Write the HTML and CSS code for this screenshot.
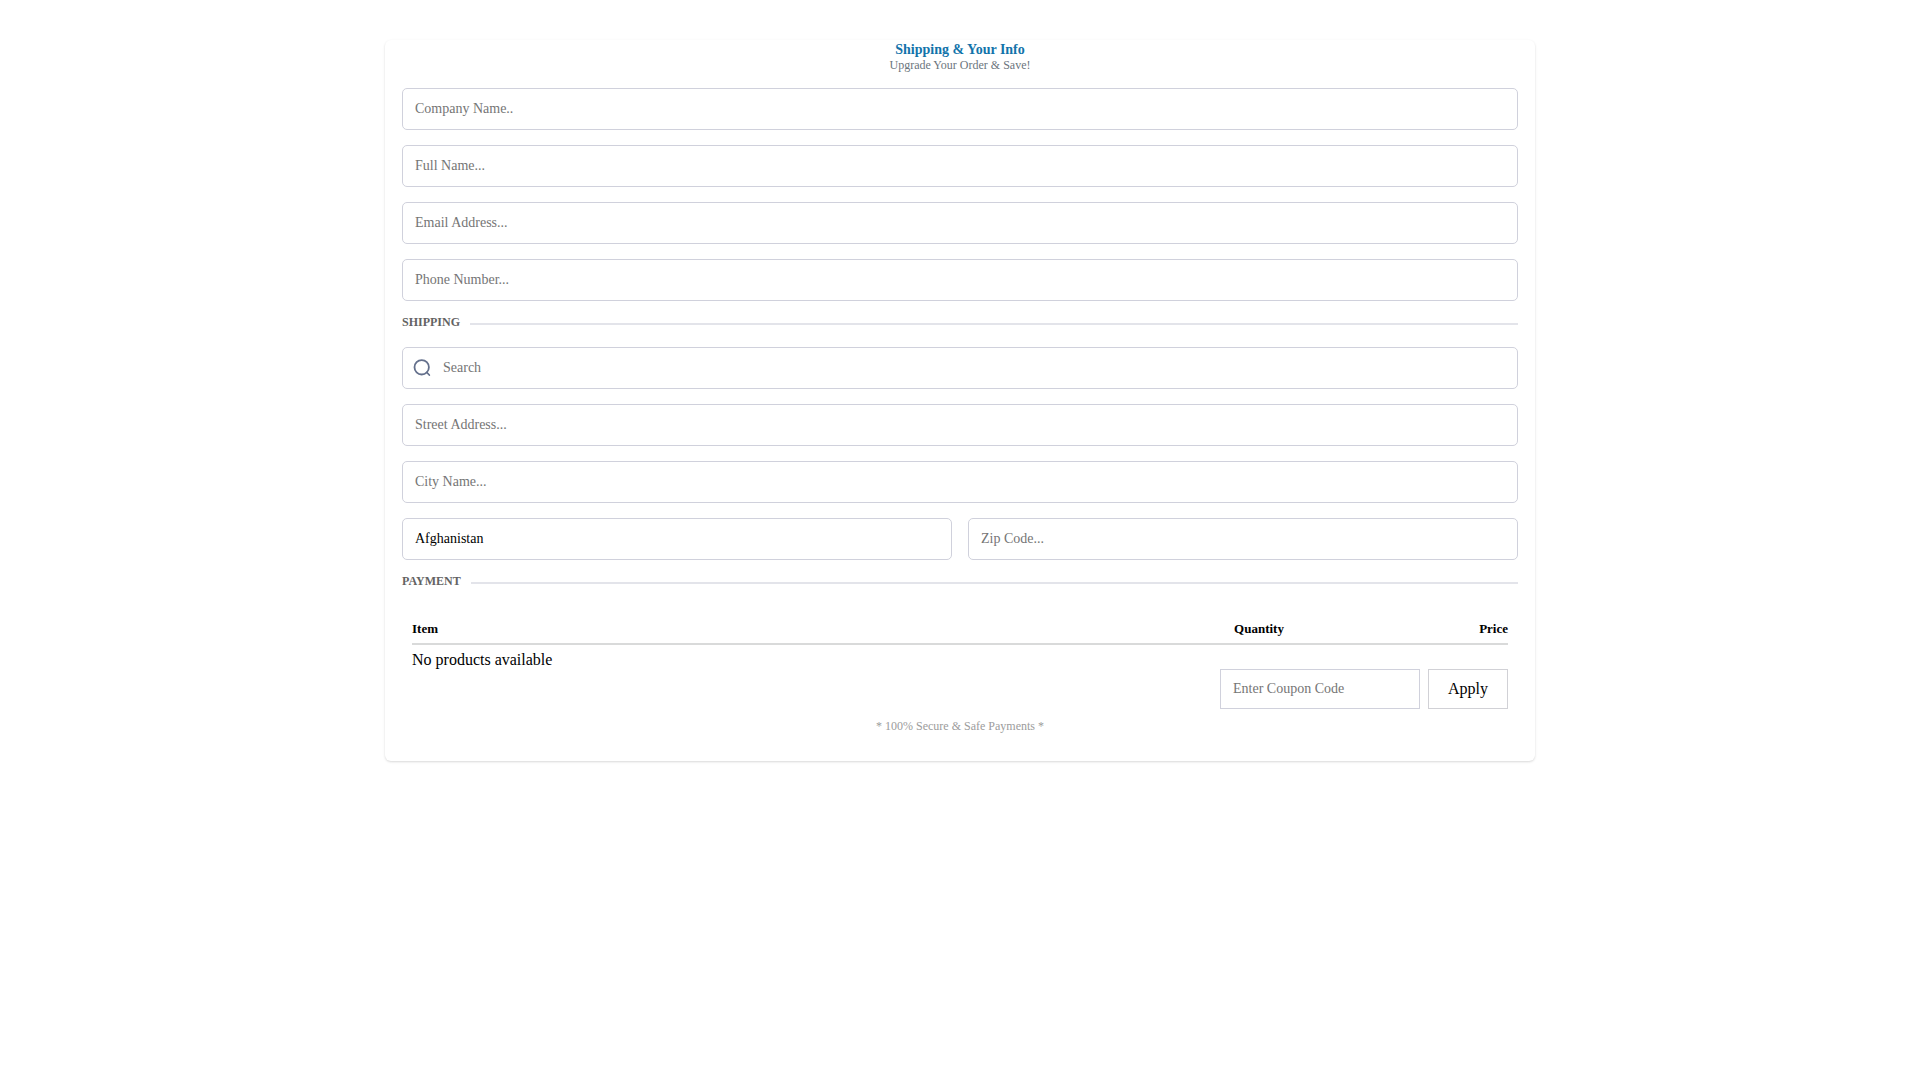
FILE: index.html
```html
<!DOCTYPE html>
<html lang="en">
<head>
  <meta charset="UTF-8" />
  <meta name="viewport" content="width=device-width, initial-scale=1.0" />
  <title>Shipping &amp; Your Info</title>
  <link rel="stylesheet" href="styles.css">
</head>
<body>
  <form class="order-form">
    <div class="form-header">
      <h1>Shipping &amp; Your Info</h1>
      <p>Upgrade Your Order &amp; Save!</p>
    </div>

    <div class="fields">
      <input class="field" type="text" name="company" placeholder="Company Name.." aria-label="Company name" />
      <input class="field" type="text" name="name" placeholder="Full Name..." aria-label="Full name" />
      <input class="field" type="email" name="email" placeholder="Email Address..." aria-label="Email address" />
      <input class="field" type="tel" name="phone" placeholder="Phone Number..." aria-label="Phone number" />
    </div>

    <h2 class="divider">SHIPPING</h2>

    <div class="fields">
      <div class="search">
        <svg class="search-icon" width="18" height="18" viewBox="0 0 18 18" fill="none" stroke="#64708c" stroke-width="1.8" stroke-linecap="round">
          <circle cx="8.7" cy="8.3" r="7.2" />
          <path d="M13.9 13.5L16.3 16" />
        </svg>
        <input class="field" type="text" name="search" placeholder="Search" aria-label="Search address" />
      </div>
      <input class="field" type="text" name="street" placeholder="Street Address..." aria-label="Street address" />
      <input class="field" type="text" name="city" placeholder="City Name..." aria-label="City" />
      <div class="field-row">
        <select class="field" name="country" aria-label="Country">
          <option value="AF">Afghanistan</option>
          <option value="AL">Albania</option>
          <option value="DZ">Algeria</option>
        </select>
        <input class="field" type="text" name="zip" placeholder="Zip Code..." aria-label="Zip code" />
      </div>
    </div>

    <h2 class="divider">PAYMENT</h2>

    <div class="cart">
      <table class="cart-table">
        <thead>
          <tr>
            <th class="item">Item</th>
            <th class="quantity">Quantity</th>
            <th class="price">Price</th>
          </tr>
        </thead>
        <tbody>
          <tr>
            <td colspan="3">No products available</td>
          </tr>
        </tbody>
      </table>
      <div class="coupon">
        <input class="field coupon-input" type="text" name="coupon" placeholder="Enter Coupon Code" aria-label="Coupon code" />
        <button class="coupon-btn" type="button">Apply</button>
      </div>
    </div>

    <p class="secure">* 100% Secure &amp; Safe Payments *</p>
  </form>
</body>
</html>
```
FILE: styles.css
```css
* { box-sizing: border-box; }
body {
  margin: 0;
  padding: 40px 16px;
  font-family: "Liberation Serif", "Times New Roman", serif;
  font-size: 16px;
  background: white;
  color: black;
}
h1, h2, p { margin: 0; }
.order-form {
  max-width: 1150px;
  margin: 0 auto;
  padding: 0 17px 28px;
  border-radius: 6px;
  background: white;
  box-shadow: 0 1px 3px rgba(0, 0, 0, 0.1), 0 1px 2px rgba(0, 0, 0, 0.06);
}
.form-header {
  padding: 2px 0 16px;
  text-align: center;
}
.form-header h1 {
  font-size: 14px;
  line-height: 16px;
  color: #1273aa;
}
.form-header p {
  font-size: 12px;
  line-height: 14px;
  color: #6c757d;
}
.fields {
  display: flex;
  flex-direction: column;
  gap: 15px;
}
.field {
  width: 100%;
  height: 42px;
  padding: 0 12px;
  font-family: inherit;
  font-size: 14px;
  color: black;
  background: white;
  border: 1px solid #d1d5db;
  border-color: #d0d1dc;
  border-radius: 5px;
  appearance: none;
}
select.field { padding-bottom: 1px; }
.field::placeholder { color: #757575; }
.field-row {
  display: flex;
  gap: 16px;
}
.search { position: relative; }
.search .field { padding-left: 40px; }
/* icon lies over the search box */
.search-icon {
  position: absolute;
  left: 11px;
  top: 12px;
}
.divider {
  display: flex;
  align-items: center;
  gap: 10px;
  height: 46px;
  padding-bottom: 4px;
  font-size: 12px;
  line-height: 14px;
  color: #636363;
}
.divider::after {
  content: "";
  flex: 1;
  height: 2px;
  margin-top: 4px;
  background: #e3e4ea;
}
.cart { padding: 15px 10px 0; }
.cart-table {
  width: 100%;
  table-layout: fixed;
  border-collapse: separate;
  border-spacing: 0;
}
.cart-table th {
  padding: 0 0 7px;
  font-size: 13px;
  line-height: 15px;
  text-align: left;
  border-bottom: 2px solid #d9dada;
}
.cart-table .quantity {
  width: 180px;
  text-align: center;
}
.cart-table .price {
  width: 159px;
  text-align: right;
}
.cart-table td {
  padding: 6px 0 0;
  line-height: 18px;
}
.coupon {
  display: flex;
  justify-content: flex-end;
  gap: 8px;
}
.coupon-input {
  width: 200px;
  height: 40px;
  border-radius: 0;
}
.coupon-btn {
  width: 80px;
  height: 40px;
  padding: 0;
  font-family: inherit;
  font-size: 16px;
  color: black;
  background: white;
  border: 1px solid #d1d1d6;
  cursor: pointer;
}
.secure {
  padding-top: 10px;
  font-size: 12px;
  line-height: 14px;
  text-align: center;
  color: #9c9c9c;
}
```
